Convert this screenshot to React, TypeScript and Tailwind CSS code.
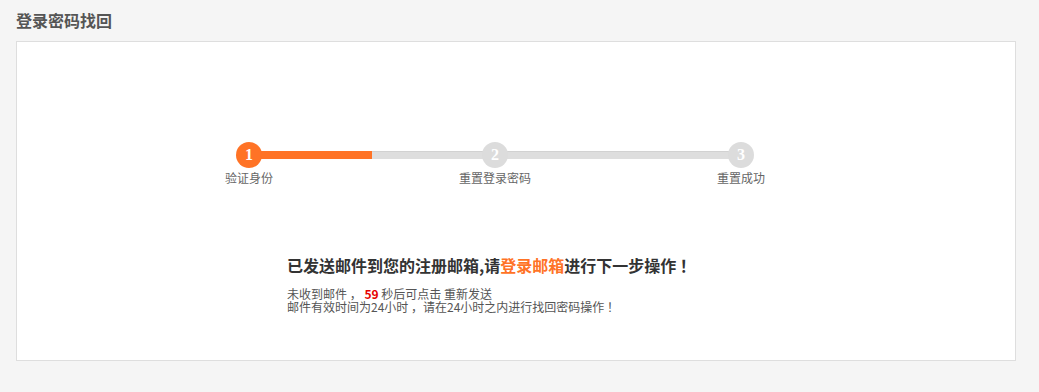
import React from "react";

const steps = [
  { n: "1", label: "验证身份", active: true },
  { n: "2", label: "重置登录密码", active: false },
  { n: "3", label: "重置成功", active: false },
];

export default function App() {
  return (
    <div
      className="min-h-[392px] w-full bg-[#f5f5f5] px-4 pt-[8px] pb-[31px]"
      style={{ fontFamily: '"Noto Sans CJK SC", "Noto Sans", sans-serif' }}
    >
      <h1 className="mb-[9px] text-[16px] font-bold leading-[24px] text-[#555]">登录密码找回</h1>
      <div className="h-[320px] w-[1000px] border border-[#dedede] bg-white">
        <div className="pt-[100px] pl-[109px]">
          <div className="relative grid w-[738px] grid-cols-3">
            <div className="absolute left-[123px] right-[123px] top-[9px] h-[8px] bg-[#dedede] border-t border-[#d2d2d2]">
              <div className="-mt-px h-[8px] w-1/4 bg-[#ff7326]" />
            </div>
            {steps.map((s) => (
              <div key={s.n} className="relative flex flex-col items-center">
                <div
                  className={`flex h-[26px] w-[26px] items-center justify-center rounded-full text-[16px] font-bold leading-none text-white ${
                    s.active ? "bg-[#ff7326]" : "bg-[#dcdcdc]"
                  }`}
                  style={{ fontFamily: '"Liberation Serif", "DejaVu Serif", serif' }}
                >
                  {s.n}
                </div>
                <div className="mt-[2px] text-[12px] leading-[16px] text-[#666]">{s.label}</div>
              </div>
            ))}
          </div>
          <div className="ml-[161px] mt-[67px]">
            <div className="text-[16px] font-bold leading-[24px] text-[#333]">
              已发送邮件到您的注册邮箱,请<span className="text-[#ff7326]">登录邮箱</span>进行下一步操作 ！
            </div>
            <div className="mt-[10px] text-[12px] leading-[13px] text-[#555]">
              <div>
                未收到邮件 ， <span className="font-bold text-[#e60000]">59</span> 秒后可点击 重新发送
              </div>
              <div>邮件有效时间为24小时 ，请在24小时之内进行找回密码操作 ！</div>
            </div>
          </div>
        </div>
      </div>
    </div>
  );
}
